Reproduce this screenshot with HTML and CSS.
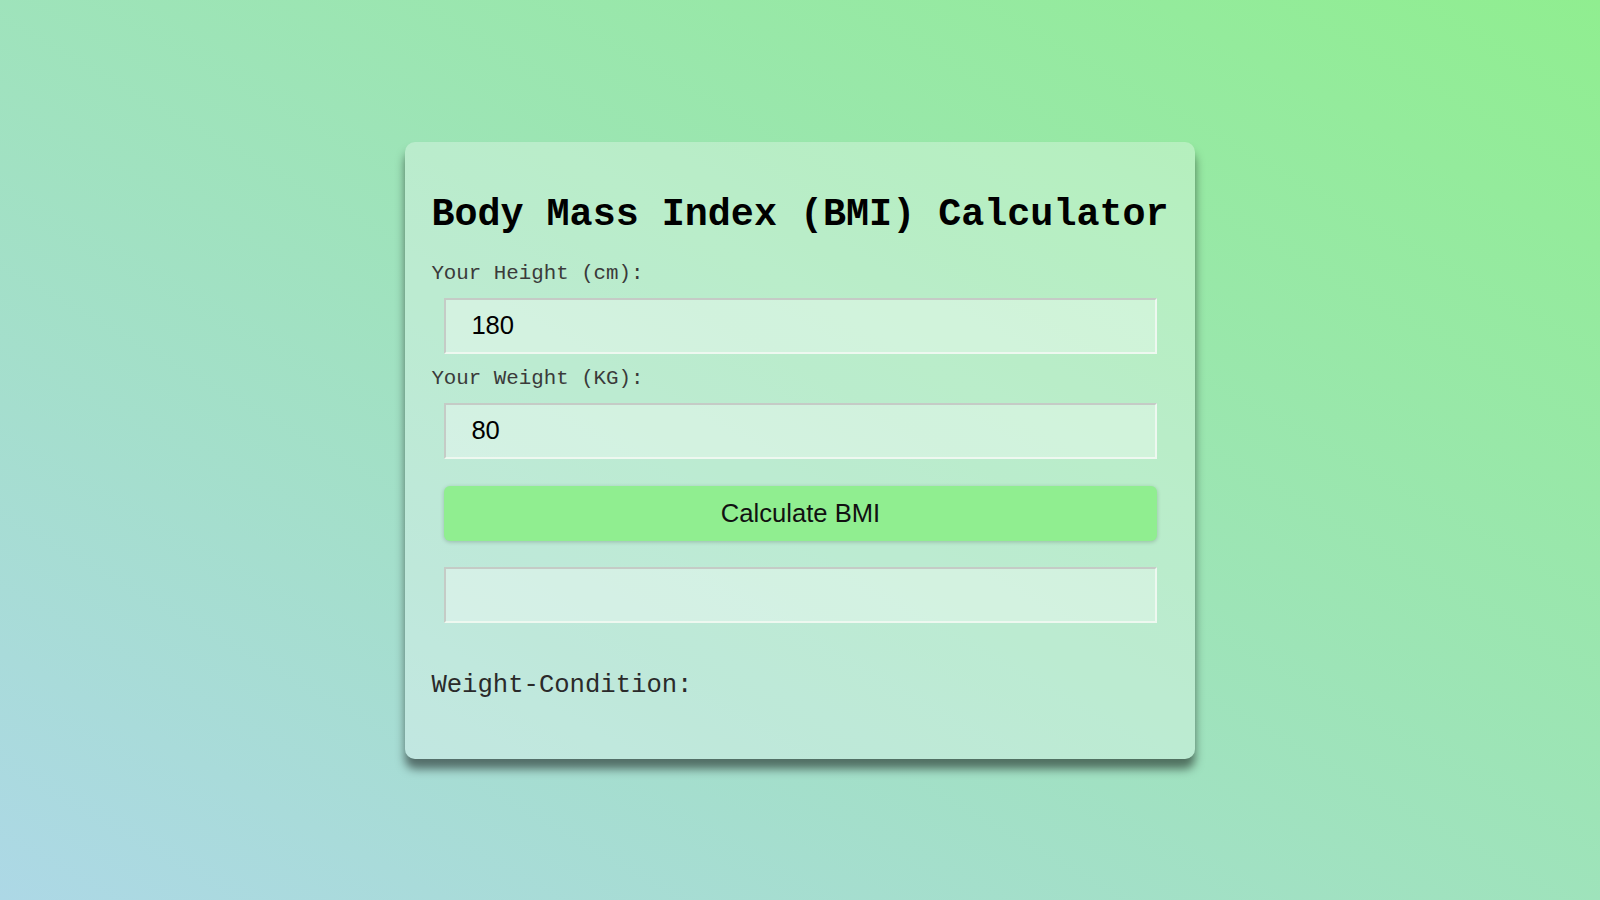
FILE: index.html
```html
<!DOCTYPE html>
<html lang="en">
<head>
<meta charset="utf-8">
<title>BMI Calculator</title>
<link rel="stylesheet" href="styles.css">
</head>
<body>
<div class="card">
  <h1 class="title">Body Mass Index (BMI) Calculator</h1>
  <label class="label" for="height">Your Height (cm):</label>
  <input class="field" id="height" type="text" value="180">
  <label class="label label-second" for="weight">Your Weight (KG):</label>
  <input class="field field-second" id="weight" type="text" value="80">
  <button class="btn" type="button">Calculate BMI</button>
  <input class="field result" type="text" value="" readonly>
  <p class="condition">Weight-Condition:</p>
</div>
</body>
</html>
```
FILE: styles.css
```css
html, body {
  margin: 0;
  padding: 0;
  height: 100%;
}
body {
  background: linear-gradient(to top right, #add8e6, #90ee90);
  display: flex;
  align-items: center;
  justify-content: center;
  font-family: "Liberation Mono", "Courier New", monospace;
}
.card {
  width: fit-content;
  display: flex;
  flex-direction: column;
  padding: 25px 26px;
  background: rgba(255, 255, 255, 0.3);
  border-radius: 10px;
  box-shadow: 0 10px 10px rgba(0, 0, 0, 0.5);
}
.title {
  margin: 26px 0 25px;
  font-size: 38.4px;
  line-height: 44px;
  font-weight: bold;
  color: #000;
  white-space: nowrap;
}
.label {
  font-size: 20.8px;
  line-height: 24px;
  color: #3a3a3a;
}
.label-second {
  margin-top: 13px;
}
.field {
  margin: 12px 12px 0 13px;
  height: 56px;
  box-sizing: border-box;
  padding: 0 25px;
  font-family: "Liberation Sans", Arial, sans-serif;
  font-size: 25.6px;
  color: #000;
  background: rgba(255, 255, 255, 0.34);
  border-style: solid;
  border-width: 2px;
  border-color: #c5cbc6 #eef8f0 #eef8f0 #c5cbc6;
  outline: none;
}
.btn {
  margin: 27px 12px 0 13px;
  height: 55px;
  border: none;
  border-radius: 6px;
  background: #90ee90;
  box-shadow: 0 1px 4px rgba(0, 0, 0, 0.2);
  font-family: "Liberation Sans", Arial, sans-serif;
  font-size: 25.6px;
  color: #111;
}
.result {
  margin-top: 26px;
}
.condition {
  margin: 48px 0 34px;
  font-size: 25.6px;
  line-height: 29px;
  color: #2a2a2a;
}
```
